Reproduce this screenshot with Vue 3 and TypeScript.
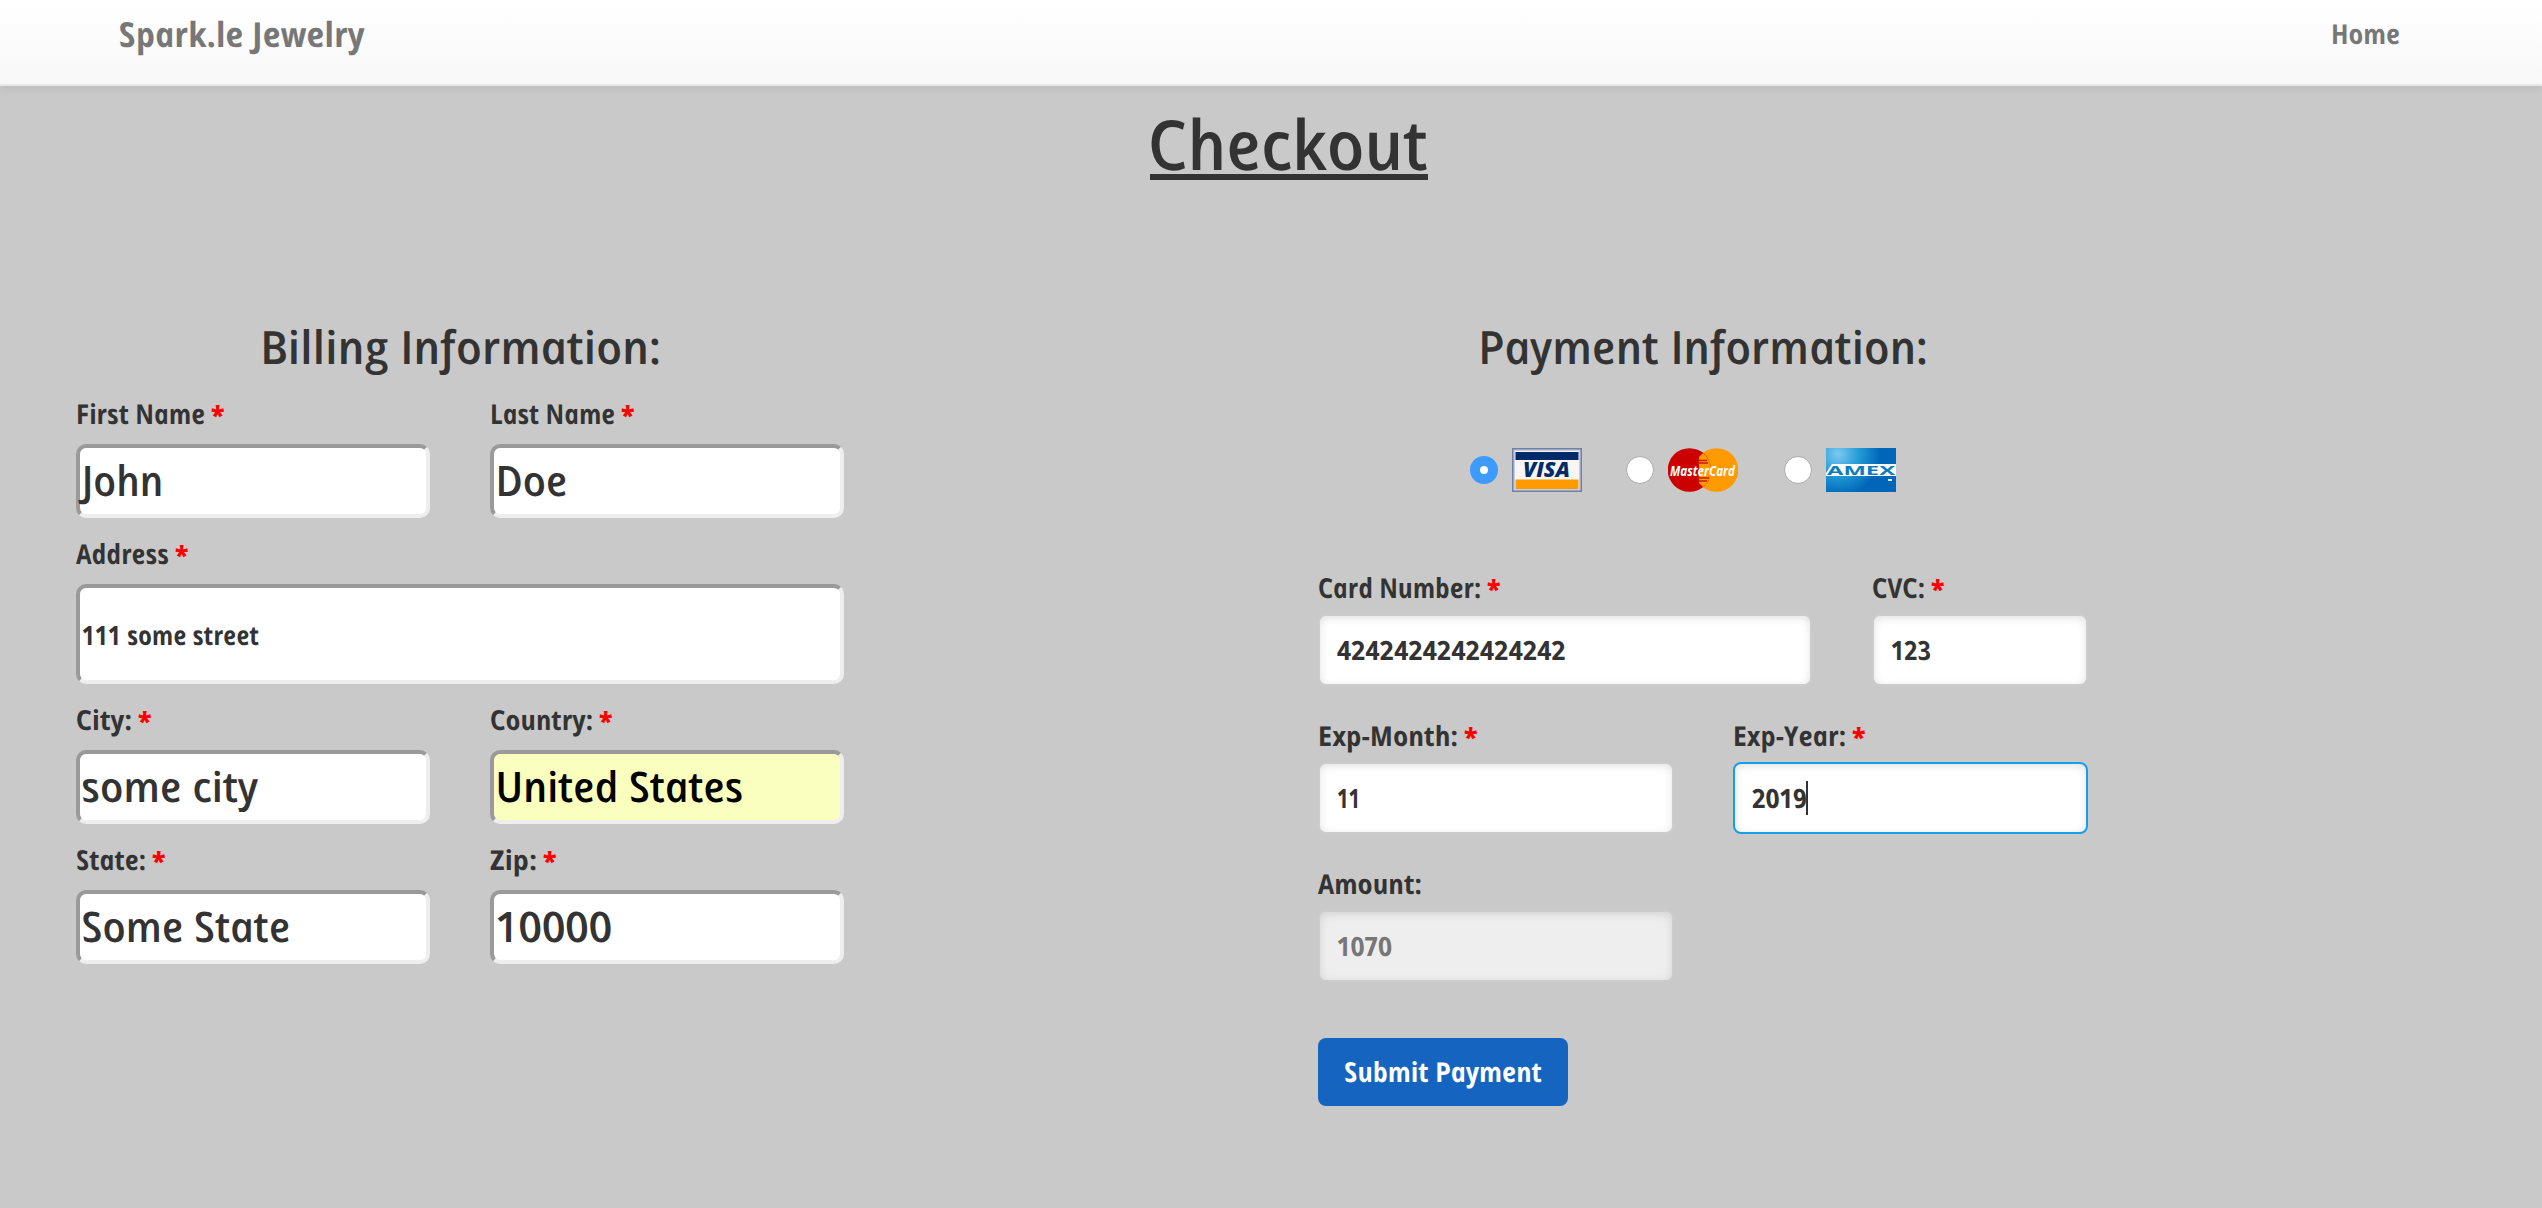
<script setup lang="ts">
import type { Directive } from 'vue'

interface Field {
  label: string
  labelWidth: number
  value: string
  valueWidth: number
  required?: boolean
  size: string
  state?: string
}

const billing: Field[] = [
  { label: 'First Name', labelWidth: 129, value: 'John', valueWidth: 82, required: true, size: 'half' },
  { label: 'Last Name', labelWidth: 125, value: 'Doe', valueWidth: 72, required: true, size: 'half' },
  { label: 'Address', labelWidth: 93, value: '111 some street', valueWidth: 177, required: true, size: 'full' },
  { label: 'City:', labelWidth: 56, value: 'some city', valueWidth: 177, required: true, size: 'half' },
  { label: 'Country:', labelWidth: 103, value: 'United States', valueWidth: 248, required: true, size: 'half', state: 'autofill' },
  { label: 'State:', labelWidth: 70, value: 'Some State', valueWidth: 209, required: true, size: 'half' },
  { label: 'Zip:', labelWidth: 47, value: '10000', valueWidth: 117, required: true, size: 'half' },
]

const payment: Field[] = [
  { label: 'Card Number:', labelWidth: 163, value: '4242424242424242', valueWidth: 229, required: true, size: 'number' },
  { label: 'CVC:', labelWidth: 53, value: '123', valueWidth: 40, required: true, size: 'cvc' },
  { label: 'Exp-Month:', labelWidth: 140, value: '11', valueWidth: 23, required: true, size: 'month' },
  { label: 'Exp-Year:', labelWidth: 113, value: '2019', valueWidth: 55, required: true, size: 'year', state: 'focused' },
  { label: 'Amount:', labelWidth: 104, value: '1070', valueWidth: 55, size: 'month', state: 'disabled' },
]

// Condenses the text to a given advance width and straightens the cursive letterforms.
const vFit: Directive<HTMLElement, number> = {
  mounted(el, { value }) {
    const natural = el.getBoundingClientRect().width
    el.style.marginRight = `${value - natural}px`
    el.style.transform = `translateX(1.6px) scaleX(${value / natural}) skewX(12deg)`
  },
}
</script>

<template>
  <div class="page">
    <header class="navbar">
      <a class="brand"><span v-fit="246" class="t">Spark.le Jewelry</span></a>
      <a class="home"><span v-fit="69" class="t">Home</span></a>
    </header>

    <h1 class="title"><span v-fit="280" class="t">Checkout</span></h1>

    <main class="columns">
      <section class="billing">
        <h2><span v-fit="401" class="t">Billing Information:</span></h2>
        <div class="fields">
          <div v-for="f in billing" :key="f.label" class="field" :class="f.size">
            <label><span v-fit="f.labelWidth" class="t">{{ f.label }}</span><span v-if="f.required" class="star">*</span></label>
            <div class="control" :class="f.state"><span v-fit="f.valueWidth" class="t">{{ f.value }}</span></div>
          </div>
        </div>
      </section>

      <section class="payment">
        <h2><span v-fit="450" class="t">Payment Information:</span></h2>
        <div class="cards">
          <span class="radio checked"></span>
          <svg class="card" width="70" height="44" viewBox="0 0 70 44">
            <rect width="70" height="44" fill="#6f7fa9" />
            <rect x="1.5" y="1.5" width="67" height="41" fill="#c9cede" />
            <rect x="3" y="3" width="64" height="38" fill="#f7f6f4" />
            <rect x="3.5" y="4" width="63" height="8" fill="#002b66" />
            <rect x="3.5" y="31.5" width="63" height="9.5" fill="#ff9a00" />
            <text x="11" y="29" textLength="47" lengthAdjust="spacingAndGlyphs" class="visa">VISA</text>
          </svg>
          <span class="radio"></span>
          <svg class="card second" width="70" height="44" viewBox="0 0 70 44">
            <circle cx="48.5" cy="22" r="21.8" fill="#ff9a00" />
            <circle cx="21.5" cy="22" r="21.8" fill="#cb0000" />
            <path d="M35 5 A21.8 21.8 0 0 1 35 39 L31 35V9Z" fill="#ff9a00" />
            <path d="M30 12.5H39M29 15H40M29 30H41M30 33H39" stroke="#cb1800" stroke-width="1.3" />
            <text x="2" y="28" textLength="65" lengthAdjust="spacingAndGlyphs" class="mc">MasterCard</text>
          </svg>
          <span class="radio"></span>
          <svg class="card" width="70" height="44" viewBox="0 0 70 44">
            <defs>
              <radialGradient id="amexGlow" gradientUnits="userSpaceOnUse" cx="12" cy="6" r="42">
                <stop offset="0" stop-color="#7ccaf0" />
                <stop offset=".5" stop-color="#249bd7" />
                <stop offset="1" stop-color="#0067b8" />
              </radialGradient>
            </defs>
            <rect width="70" height="44" fill="url(#amexGlow)" />
            <path d="M0 25L6 16H70V28H0Z" fill="#fff" />
            <text x="1" y="26.5" textLength="68" lengthAdjust="spacingAndGlyphs" class="amex">AMEX</text>
            <rect x="62" y="31" width="4" height="2" fill="#d9f0fb" />
          </svg>
        </div>
        <div class="fields">
          <div v-for="f in payment" :key="f.label" class="field" :class="f.size">
            <label><span v-fit="f.labelWidth" class="t">{{ f.label }}</span><span v-if="f.required" class="star">*</span></label>
            <div class="control" :class="f.state"><span v-fit="f.valueWidth" class="t">{{ f.value }}</span><i v-if="f.state === 'focused'" class="caret"></i></div>
          </div>
        </div>
        <button type="button"><span v-fit="198" class="t">Submit Payment</span></button>
      </section>
    </main>
  </div>
</template>

<style>
body {
  background: #c9c9c9;
}
</style>

<style scoped>
.page {
  box-sizing: border-box;
  width: 2542px;
  height: 1208px;
  overflow: hidden;
  background: #c9c9c9;
  color: #333;
  font-family: 'Open Sans', 'Noto Sans', sans-serif;
  font-weight: 650;
}

.t {
  display: inline-block;
  font-style: italic;
  white-space: pre;
  transform-origin: 0 calc(50% + 0.388em);
}

.navbar {
  box-sizing: border-box;
  display: flex;
  justify-content: space-between;
  height: 86px;
  padding: 14px 142px 0 119px;
  border-bottom: 2px solid #e7e7e7;
  background: linear-gradient(#fff, #f8f8f8);
  box-shadow: 0 2px 10px rgba(0, 0, 0, 0.075);
  color: #777;
  line-height: 40px;
}

.brand {
  font-size: 34.5px;
  font-weight: 700;
}

.home {
  font-size: 27.5px;
  font-weight: 750;
}

.title {
  position: relative;
  width: 278px;
  height: 80px;
  margin: 17px 0 0 1150px;
  font-size: 69px;
  font-weight: 650;
  line-height: 80px;
}

.title::after {
  content: '';
  position: absolute;
  left: 0;
  top: 71px;
  width: 278px;
  height: 6px;
  background: #333;
}

.columns {
  display: flex;
  gap: 474px;
  padding: 133px 0 0 76px;
}

.billing {
  width: 768px;
}

.payment {
  width: 770px;
}

h2 {
  height: 60px;
  margin: 0;
  font-size: 46px;
  font-weight: 650;
  line-height: 60px;
}

.billing h2 {
  padding-left: 185px;
}

.payment h2 {
  padding-left: 161px;
}

.fields {
  display: flex;
  flex-wrap: wrap;
  justify-content: space-between;
}

.billing .fields {
  row-gap: 16px;
  margin-top: 18px;
}

.payment .fields {
  row-gap: 30px;
  margin-top: 76px;
}

label {
  display: block;
  height: 40px;
  font-size: 27.5px;
  font-weight: 750;
  line-height: 40px;
}

.star {
  display: inline-block;
  margin-left: 6px;
  color: #f00;
  font-size: 25px;
  font-weight: 800;
}

.control {
  box-sizing: border-box;
  background: #fff;
}

.billing .control {
  height: 74px;
  margin-top: 10px;
  padding-left: 2px;
  border: 4px solid;
  border-color: #9a9a9a #eee #eee #9a9a9a;
  border-radius: 10px;
  font-size: 42px;
  line-height: 63px;
}

.half {
  width: 354px;
}

.full {
  width: 768px;
}

.billing .full .control {
  height: 100px;
  font-size: 26.5px;
  line-height: 95px;
  font-weight: 700;
}

.billing .control.autofill {
  background: #faffbd;
  color: #000;
}

.payment .control {
  display: flex;
  align-items: center;
  height: 72px;
  margin-top: 6px;
  padding-left: 17px;
  border: 2px solid #ccc;
  border-radius: 8px;
  box-shadow: inset 0 2px 8px rgba(0, 0, 0, 0.12);
  font-size: 26.5px;
  font-weight: 700;
  line-height: 67px;
}

.payment .control.focused {
  border-color: #149fe8;
}

.payment .control.disabled {
  background: #eee;
  color: #777;
}

.number {
  width: 494px;
}

.cvc {
  width: 216px;
}

.month {
  width: 356px;
}

.year {
  width: 355px;
}

.caret {
  width: 2px;
  height: 34px;
  margin-left: -1px;
  background: #333;
}

.cards {
  display: flex;
  align-items: center;
  height: 44px;
  margin-top: 72px;
  padding-left: 152px;
}

.radio {
  box-sizing: border-box;
  width: 28px;
  height: 28px;
  border: 1px solid #aaa;
  border-radius: 50%;
  background: #fff;
}

.radio.checked {
  border: 10px solid #3d9aff;
}

.card {
  margin: 0 44px 0 14px;
}

.card.second {
  margin-right: 46px;
}

.visa {
  fill: #002b66;
  font: italic 800 21px 'Open Sans', sans-serif;
}

.mc {
  fill: #fff;
  font: italic 700 14px 'Open Sans', sans-serif;
}

.amex {
  fill: #0a7cc0;
  font: 700 13px 'Open Sans', sans-serif;
}

button {
  display: block;
  width: 250px;
  height: 68px;
  margin-top: 56px;
  padding: 0 0 0 26px;
  border: 0;
  border-radius: 8px;
  background: #1565c0;
  color: #fff;
  font: 750 27.5px/68px 'Open Sans', sans-serif;
  text-align: left;
}
</style>
